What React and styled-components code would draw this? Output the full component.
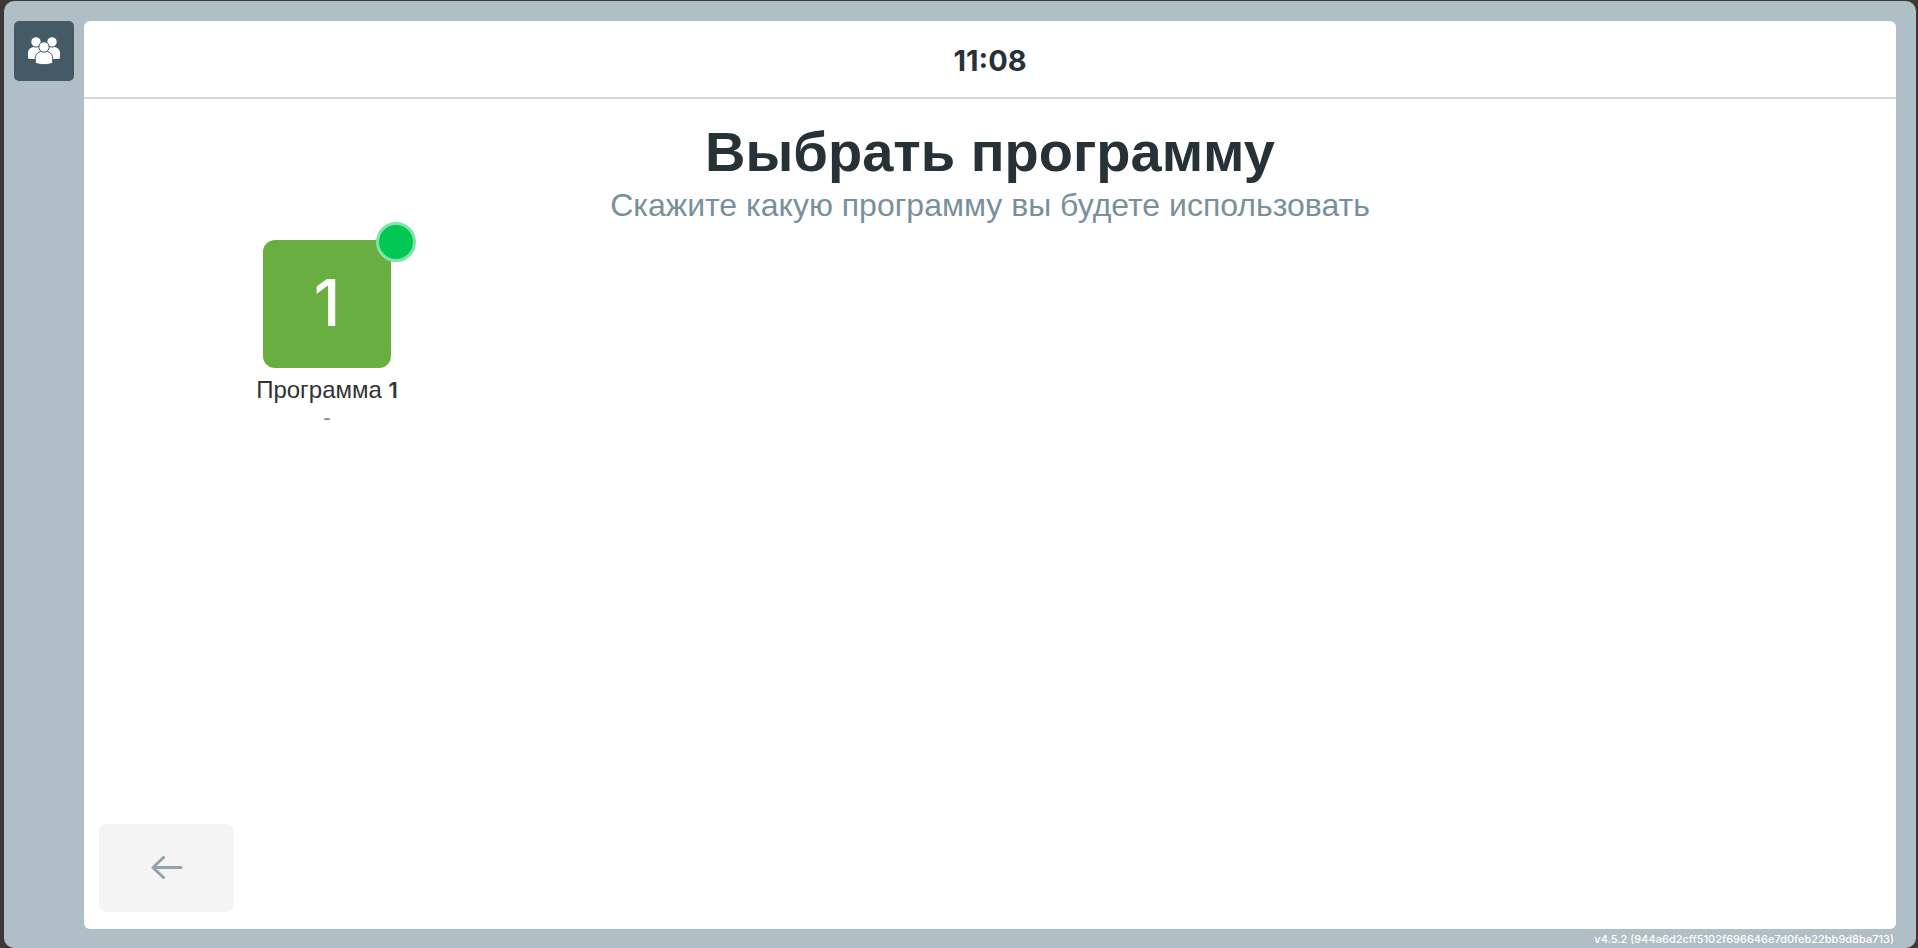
import React from "react";
import styled, { createGlobalStyle } from "styled-components";

const GlobalStyle = createGlobalStyle`
  * {
    box-sizing: border-box;
  }

  body {
    margin: 0;
    background-color: #3b3938;
    color: #263238;
    font-family: "Liberation Sans", Arial, sans-serif;
  }

  button {
    border: 0;
    padding: 0;
    font: inherit;
    color: inherit;
    cursor: pointer;
  }
`;

const Frame = styled.div`
  display: flex;
  flex-direction: column;
  height: calc(100vh - 1px);
  margin: 1px 2px 0 4px;
  padding: 20px 20px 0 10px;
  border-radius: 10px;
  background-color: #b0bec5;
`;

const Body = styled.div`
  flex: 1;
  display: flex;
  align-items: stretch;
  gap: 10px;
  min-height: 0;
`;

const Sidebar = styled.nav`
  width: 60px;
`;

const SidebarButton = styled.button`
  display: flex;
  align-items: center;
  justify-content: center;
  width: 60px;
  height: 60px;
  border-radius: 5px;
  background-color: #455a64;
`;

const Panel = styled.div`
  flex: 1;
  display: flex;
  flex-direction: column;
  border-radius: 6px;
  background-color: #fff;
`;

const Header = styled.header`
  display: flex;
  align-items: center;
  justify-content: center;
  height: 78px;
  padding-top: 2px;
  border-bottom: 2px solid #cfd8dc;
`;

const Clock = styled.time`
  font-family: Inter, sans-serif;
  font-weight: 700;
  font-size: 29px;
`;

const Content = styled.main`
  flex: 1;
  padding: 19px 160px 0;
`;

const Title = styled.h1`
  margin: 0;
  font-weight: 700;
  font-size: 56px;
  line-height: 68px;
  text-align: center;
`;

const Description = styled.p`
  margin: 0;
  font-size: 32px;
  line-height: 38px;
  text-align: center;
  color: #78909c;
`;

const Programs = styled.div`
  display: flex;
  flex-wrap: wrap;
  gap: 32px;
  padding-top: 16px;
`;

const Program = styled.button`
  display: flex;
  flex-direction: column;
  align-items: center;
  width: 166px;
  background: none;
`;

const Tile = styled.span`
  position: relative;
  display: flex;
  align-items: center;
  justify-content: center;
  width: 128px;
  height: 128px;
  border-radius: 12px;
  background-color: ${(props) => props.$color};
  color: #fff;
  font-family: Inter, sans-serif;
  font-weight: 500;
  font-size: 64px;
  line-height: 72px;
  padding-bottom: 2px;
`;

const Status = styled.span`
  position: absolute;
  top: -18px;
  right: -25px;
  width: 40px;
  height: 40px;
  border: 3px solid #80e3a9;
  border-radius: 50%;
  background-color: #00c853;
`;

const ProgramName = styled.span`
  margin-top: 8px;
  font-size: 24px;
  line-height: 28px;
  color: #333;
`;

const ProgramNumber = styled.span`
  font-family: Inter, sans-serif;
  font-weight: 600;
  font-size: 22px;
`;

const ProgramNote = styled.span`
  font-size: 22px;
  line-height: 28px;
  color: #78909c;
`;

const Footer = styled.footer`
  padding: 0 15px 17px;
`;

const BackButton = styled.button`
  display: flex;
  align-items: center;
  justify-content: center;
  width: 135px;
  height: 88px;
  border-radius: 8px;
  background-color: #f4f4f4;
`;

const Version = styled.div`
  height: 19px;
  padding-right: 2px;
  font-family: Inter, sans-serif;
  font-weight: 500;
  font-size: 11px;
  line-height: 20px;
  text-align: right;
  color: #fff;
`;

const programs = [{ id: 1, name: "Программа", note: "-", color: "#69ae40" }];

const PeopleIcon = () => (
  <svg width="32" height="28" viewBox="0 0 32 28" fill="#fff" aria-hidden="true">
    <path d="M0 21.5V16.500C0 12 3 9.800 8 9.800S16 12 16 16.500V22H8C5 22.200 2 22 0 21.500z" />
    <path d="M32 21.500V16.500C32 12 29 9.800 24 9.800S16 12 16 16.500V22h8c3 .2 6 0 8-.5z" />
    <g stroke="#455a64" strokeWidth="1">
      <circle cx="8" cy="4.900" r="5.200" />
      <circle cx="24" cy="4.900" r="5.200" />
      <path d="M7.300 26v-4.500C7.300 17 10.500 14 16 14s8.700 3 8.700 7.500V26c-5 2.200-12.400 2.200-17.400 0z" />
      <circle cx="16" cy="10" r="5.200" />
    </g>
  </svg>
);

const ArrowIcon = () => (
  <svg
    width="32"
    height="24"
    viewBox="0 0 32 24"
    fill="none"
    stroke="#90a4ae"
    strokeWidth="3"
    strokeLinecap="round"
    strokeLinejoin="round"
    aria-hidden="true"
  >
    <path d="M30 11.500H2M12.500 1.500L2 11.500l10.500 10" />
  </svg>
);

const App = () => {
  return (
    <>
      <GlobalStyle />
      <Frame>
        <Body>
          <Sidebar>
            <SidebarButton aria-label="Пользователи">
              <PeopleIcon />
            </SidebarButton>
          </Sidebar>

          <Panel>
            <Header>
              <Clock>11:08</Clock>
            </Header>

            <Content>
              <Title>Выбрать программу</Title>
              <Description>Скажите какую программу вы будете использовать</Description>

              <Programs>
                {programs.map((program) => (
                  <Program key={program.id}>
                    <Tile $color={program.color}>
                      {program.id}
                      <Status />
                    </Tile>
                    <ProgramName>
                      {program.name} <ProgramNumber>{program.id}</ProgramNumber>
                    </ProgramName>
                    <ProgramNote>{program.note}</ProgramNote>
                  </Program>
                ))}
              </Programs>
            </Content>

            <Footer>
              <BackButton aria-label="Назад">
                <ArrowIcon />
              </BackButton>
            </Footer>
          </Panel>
        </Body>

        <Version>v4.5.2 (944a6d2cff5102f696646e7d0feb22bb9d8ba713)</Version>
      </Frame>
    </>
  );
};

export default App;
